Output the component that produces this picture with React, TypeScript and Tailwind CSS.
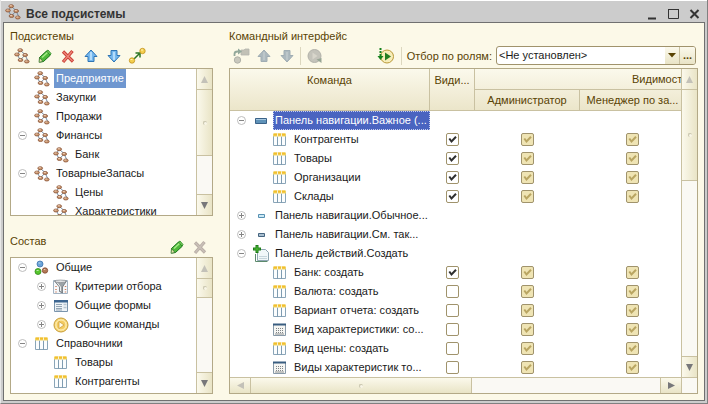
import React from 'react';

type IconName =
  | 'subsystem' | 'table' | 'common' | 'filter' | 'form' | 'command'
  | 'bar' | 'dash' | 'darkdash' | 'create' | 'chart';

const ovals = (pts: number[][], fill: string, edge: string) =>
  pts.map(([x, y], i) => (
    <g key={i}>
      <ellipse cx={x} cy={y} rx="2.4" ry="1.5" fill={fill} stroke={edge} strokeWidth="0.8" />
      <path d={`M${x - 1.4} ${y - 0.5}h2`} stroke="#f3d8c2" strokeWidth="0.8" />
    </g>
  ));

function Icon({ name }: { name: IconName }) {
  const body: Record<IconName, React.ReactNode> = {
    subsystem: (
      <>
        <path d="M6.500 2.500 3 6.500M6.500 2.500l4.500 4M11 7l-5 5.500M11 7l3 6M3.500 7l3 5.500" stroke="#64809a" strokeWidth="0.900" fill="none" />
        {ovals([[6.2, 2.2], [3, 6.5], [11.2, 7], [6.5, 12], [12.8, 13.5], [5, 14]].slice(0, 5), '#c8946c', '#8c5638')}
      </>
    ),
    table: (
      <>
        <path d="M1.500 2.500h12v11h-12z" fill="#fbfdfe" stroke="#8aa5b8" />
        <path d="M5.500 2v12M9.500 2v12" stroke="#7f9cb1" />
        <path d="M1 1.500h13v3H1z" fill="#efd368" />
        <path d="M2 2.500h3M6 2.500h3M10 2.500h3" stroke="#f3bf2c" strokeWidth="2" />
        <path d="M5.500 1.500v3M9.500 1.500v3" stroke="#fbf3cf" />
      </>
    ),
    common: (
      <>
        <circle cx="6" cy="4" r="3" fill="#69a3d8" stroke="#3f75ae" strokeWidth="0.800" />
        <circle cx="4" cy="11.500" r="3" fill="#57c62e" stroke="#2e8817" strokeWidth="0.800" />
        <circle cx="11" cy="10.500" r="2.700" fill="#b47a58" stroke="#83492d" strokeWidth="0.800" />
        <path d="M4.500 3h2M2.600 10.500h2M9.800 9.500h1.500" stroke="#fff" strokeOpacity="0.600" />
      </>
    ),
    filter: (
      <>
        <path d="M.5 1.500h14v13H.5z" fill="#f6f8fa" stroke="#a4b4c3" />
        <path d="M3 7v1M3 10v1M3 12.500v1M12.500 7v1M12.500 10v1M12.500 12.500v1" stroke="#cf8062" strokeWidth="1.500" />
        <path d="M1.500 2h12L9.500 8v6l-3-1.500V8z" fill="#9da3a7" stroke="#6b7277" strokeWidth="0.800" />
        <path d="M4 3.500 7.500 8v4" stroke="#eee" fill="none" />
        <ellipse cx="7.500" cy="2.300" rx="5.500" ry="1.300" fill="#e1e3e4" stroke="#7d8286" strokeWidth="0.600" />
      </>
    ),
    form: (
      <>
        <path d="M1.500 2.500h13v11h-13z" fill="#eef3f7" stroke="#7a95ad" />
        <path d="M1 2h14v2.500H1z" fill="#3d6691" />
        <path d="M3 6.500h6M3 8.500h6M3 10.500h6M3 12h6" stroke="#93a5b4" />
        <path d="M10.500 6.500h3M10.500 9.500h3" stroke="#b9c6d1" strokeWidth="1.500" />
      </>
    ),
    command: (
      <>
        <circle cx="8" cy="8" r="7" fill="#f8dc83" stroke="#c89b32" />
        <circle cx="8" cy="8" r="5" fill="#f4cb60" stroke="#fff0b8" />
        <path d="m6 4.500 5 3.500-5 3.500z" fill="#fffbe9" stroke="#c69a35" strokeWidth="0.700" />
      </>
    ),
    bar: (
      <>
        <path d="M2.500 5.500h11v5h-11z" fill="#5f92b8" stroke="#3a6288" />
        <path d="M3 6.500h10" stroke="#a6c7df" />
      </>
    ),
    dash: <path d="M5.500 6.500h6v3h-6z" fill="#cce9f5" stroke="#5790b2" />,
    darkdash: <path d="M5.500 6.500h6v3h-6z" fill="#a9bfd0" stroke="#45647f" />,
    create: (
      <>
        <path d="M4.500 3.500h8l3 3v8h-11z" fill="#f1f7f9" stroke="#8fa6b2" />
        <path d="M2.500 8v7.500h12" fill="none" stroke="#5c8a6c" />
        <path d="M6 12.500h8M6 10.500h8" stroke="#c6d5dc" />
        <path d="M4 -1v8M0 3h8" stroke="#1e7c18" strokeWidth="3" />
        <path d="M4 0v6M1 3h6" stroke="#50bf37" />
      </>
    ),
    chart: (
      <>
        <path d="M1.500 2.500h12v11h-12z" fill="#f6f6f3" stroke="#8799a8" />
        <path d="M1 2.500h13" stroke="#395d80" strokeWidth="2" />
        <path d="M4.500 6v6M6.500 6v6M8.500 6v6M10.500 6v6" stroke="#7f8487" strokeDasharray="1 1" />
        <path d="M3 12h9" stroke="#8c9092" />
      </>
    ),
  };
  return (
    <svg viewBox="0 0 16 16" className="size-4 shrink-0 overflow-visible" aria-hidden="true">
      {body[name]}
    </svg>
  );
}

function Arrow({ down, muted }: { down?: boolean; muted?: boolean }) {
  return (
    <svg viewBox="0 0 16 16" className={down ? 'size-4 rotate-180' : 'size-4'} aria-hidden="true">
      <path
        d="M8 2 14 8.500h-3V13.500H5V8.500H2z"
        fill={muted ? '#adb9be' : '#75b8ef'}
        stroke={muted ? '#a0adb3' : '#2f75b5'}
        strokeLinejoin="round"
      />
      <path d="M8 4v8" stroke={muted ? '#bcc6c9' : '#b4dcfb'} strokeWidth="2" />
    </svg>
  );
}

function Pencil() {
  return (
    <svg viewBox="0 0 16 16" className="size-4" aria-hidden="true">
      <path d="m2.500 9.500 7-6.500 4 4-7 6.500-4 .5z" fill="#4fb83b" stroke="#187419" />
      <path d="m5 9.500 6-5.500" stroke="#a4ec85" strokeWidth="1.500" />
      <path d="m9.500 3 1.500-1 3 3.500-1 1.500z" fill="#78cf5d" stroke="#23811e" strokeWidth="0.800" />
      <path d="m2.500 9.500 3.500 4-4 .8z" fill="#e8e3ae" stroke="#276c22" strokeWidth="0.700" />
    </svg>
  );
}

function Cross({ muted }: { muted?: boolean }) {
  return (
    <svg viewBox="0 0 16 16" className="size-4" aria-hidden="true">
      <path d="m3 3.500 10 10M12.500 3l-9.500 11" stroke={muted ? '#b9aea6' : '#c93e35'} strokeWidth="3.200" />
      <path d="m3.500 4 9 9M12 3.500l-8.500 10" stroke={muted ? '#c9c0b8' : '#ee8478'} strokeWidth="1.400" />
    </svg>
  );
}

function Move() {
  return (
    <svg viewBox="0 0 16 16" className="size-4 overflow-visible" aria-hidden="true">
      <path d="M5 11 10 6M6.500 5H11v4.500" fill="none" stroke="#2c7625" strokeWidth="1.500" />
      <circle cx="3" cy="12.500" r="2.700" fill="#f4cf4e" stroke="#c1901c" strokeWidth="0.800" />
      <circle cx="13.500" cy="3" r="2.700" fill="#f4cf4e" stroke="#c1901c" strokeWidth="0.800" />
      <path d="M1.500 11.500h2M12 2h2" stroke="#fff4b8" />
    </svg>
  );
}

function MoveToGroup() {
  return (
    <svg viewBox="0 0 16 16" className="size-4 overflow-visible" aria-hidden="true">
      <path d="M8 2h3l1-1h4v6H8z" fill="#c2c1b6" stroke="#b4b5ad" strokeWidth="0.800" />
      <path d="M1.500 8V6q0-2.500 3-2.500H7" fill="none" stroke="#93a89b" strokeWidth="1.800" />
      <path d="M5 0.500 9 3.500 5 6.500z" fill="#93a89b" />
      <circle cx="4.500" cy="12" r="3.200" fill="#c9c8bd" stroke="#b1b2a9" />
    </svg>
  );
}

function AddCommand() {
  return (
    <svg viewBox="0 0 16 16" className="size-4" aria-hidden="true">
      <circle cx="7.500" cy="8" r="6.500" fill="#c4c3ba" stroke="#b2b2aa" />
      <path d="m5.500 4.500 5 3.500-5 3.500z" fill="#d8d6cb" />
      <path d="m9.500 11.500 5-1.500v5z" fill="#97a595" />
    </svg>
  );
}

function RunCommand() {
  return (
    <svg viewBox="0 0 16 16" className="size-4 overflow-visible" aria-hidden="true">
      <circle cx="9" cy="8.500" r="6.500" fill="#f8edb8" stroke="#b99939" />
      <path d="m7 4.500 6 4-6 4z" fill="#247d22" />
      <path d="M2.500 0v2M2.500 3v2M2.500 6v3" stroke="#16821c" strokeWidth="2" />
      <path d="M-.5 8h6l-3 4z" fill="#16821c" />
    </svg>
  );
}

function ToolButton({ label, disabled, children }: { label: string; disabled?: boolean; children: React.ReactNode }) {
  return (
    <button type="button" aria-label={label} disabled={disabled} className="flex h-5 w-[23px] shrink-0 items-center justify-center">
      {children}
    </button>
  );
}

function Expander({ open }: { open?: boolean }) {
  return (
    <span className="flex w-[23px] shrink-0 justify-center">
      {open !== undefined && (
        <button type="button" aria-expanded={open} aria-label="±" className="block size-[9px]">
          <svg viewBox="0 0 9 9" className="size-[9px]" aria-hidden="true">
            <circle cx="4.500" cy="4.500" r="4" fill="#fff" stroke="#b4b4b4" strokeWidth="0.900" />
            <path d={open ? 'M2 4.500h5' : 'M2 4.500h5M4.500 2v5'} stroke="#858585" />
          </svg>
        </button>
      )}
    </span>
  );
}

interface Node { text: string; icon: IconName; level?: number; open?: boolean; selected?: boolean }

function Label({ node, selectedClass }: { node: Node; selectedClass: string }) {
  return (
    <div className={`flex h-[19px] items-center ${node.level ? 'pl-[19px]' : ''}`}>
      <Expander open={node.open} />
      <Icon name={node.icon} />
      <span className={`ml-1 h-[19px] px-[2px] whitespace-nowrap ${node.selected ? selectedClass : 'leading-[19px]'}`}>{node.text}</span>
    </div>
  );
}

const faceV = 'bg-linear-to-r from-[#fbf9ec] to-[#e9e4c6]';
const faceH = 'bg-linear-to-b from-[#fbf9ec] to-[#e9e4c6]';

function Tip({ dir, muted }: { dir: 'up' | 'down' | 'left' | 'right'; muted?: boolean }) {
  const d = { up: 'M4.500 1 8 8H1z', down: 'M1 1h7L4.500 8z', left: 'M1 4.500 8 1v7z', right: 'M1 1l7 3.500L1 8z' }[dir];
  return (
    <svg viewBox="0 0 9 9" className="size-[9px]" aria-hidden="true">
      <path d={d} fill={muted ? '#c3c1b8' : '#77777a'} />
    </svg>
  );
}

function Grip() {
  return <span className="size-1 rounded-full border-t border-l border-[#c8c4ad] bg-[#f8f5e6]" />;
}

function VScroll({ thumb }: { thumb: string }) {
  return (
    <div className="flex w-4 shrink-0 flex-col border-l border-[#c9c1a1] bg-[#faf9f4]">
      <button type="button" aria-label="▲" className={`flex h-[21px] shrink-0 items-center justify-center border-b border-[#c9c1a1] ${faceV}`}>
        <Tip dir="up" muted />
      </button>
      <div className={`flex shrink-0 items-center justify-center border-b border-[#c9c1a1] ${faceV} ${thumb}`}><Grip /></div>
      <div className="flex-1" />
      <button type="button" aria-label="▼" className={`flex h-[21px] shrink-0 items-center justify-center border-t border-[#c9c1a1] ${faceV}`}>
        <Tip dir="down" />
      </button>
    </div>
  );
}

function Tree({ nodes, thumb, className }: { nodes: Node[]; thumb: string; className: string }) {
  return (
    <div className={`flex overflow-hidden border border-[#b3a987] bg-white ${className}`}>
      <ul className="min-w-0 flex-1 overflow-hidden">
        {nodes.map((n) => (
          <li key={n.text}><Label node={n} selectedClass="bg-[#6f97d0] leading-[19px] text-white" /></li>
        ))}
      </ul>
      <VScroll thumb={thumb} />
    </div>
  );
}

function Check({ label, checked, disabled }: { label: string; checked?: boolean; disabled?: boolean }) {
  return (
    <label className="mx-auto grid size-[13px]">
      <input
        type="checkbox"
        aria-label={label}
        defaultChecked={checked}
        disabled={disabled}
        className="peer col-start-1 row-start-1 size-[13px] appearance-none rounded-[2px] border border-[#a0936c] bg-white disabled:bg-[#efe4b4]"
      />
      <svg
        viewBox="0 0 13 13"
        className="pointer-events-none invisible col-start-1 row-start-1 size-[13px] text-[#2f2f2f] peer-checked:visible peer-disabled:text-[#b9a562]"
        aria-hidden="true"
      >
        <path d="M3.300 5.500 5.500 8.500 10 3.800" fill="none" stroke="currentColor" strokeWidth="2" />
      </svg>
    </label>
  );
}

const subsystems: Node[] = [
  { text: 'Предприятие', icon: 'subsystem', selected: true },
  { text: 'Закупки', icon: 'subsystem' },
  { text: 'Продажи', icon: 'subsystem' },
  { text: 'Финансы', icon: 'subsystem', open: true },
  { text: 'Банк', icon: 'subsystem', level: 1 },
  { text: 'ТоварныеЗапасы', icon: 'subsystem', open: true },
  { text: 'Цены', icon: 'subsystem', level: 1 },
  { text: 'Характеристики', icon: 'subsystem', level: 1 },
];

const contents: Node[] = [
  { text: 'Общие', icon: 'common', open: true },
  { text: 'Критерии отбора', icon: 'filter', level: 1, open: false },
  { text: 'Общие формы', icon: 'form', level: 1, open: false },
  { text: 'Общие команды', icon: 'command', level: 1, open: false },
  { text: 'Справочники', icon: 'table', open: true },
  { text: 'Товары', icon: 'table', level: 1 },
  { text: 'Контрагенты', icon: 'table', level: 1 },
];

const commands: (Node & { visible?: boolean })[] = [
  { text: 'Панель навигации.Важное (...', icon: 'bar', open: true, selected: true },
  { text: 'Контрагенты', icon: 'table', level: 1, visible: true },
  { text: 'Товары', icon: 'table', level: 1, visible: true },
  { text: 'Организации', icon: 'table', level: 1, visible: true },
  { text: 'Склады', icon: 'table', level: 1, visible: true },
  { text: 'Панель навигации.Обычное...', icon: 'dash', open: false },
  { text: 'Панель навигации.См. так...', icon: 'darkdash', open: false },
  { text: 'Панель действий.Создать', icon: 'create', open: true },
  { text: 'Банк: создать', icon: 'table', level: 1, visible: true },
  { text: 'Валюта: создать', icon: 'table', level: 1, visible: false },
  { text: 'Вариант отчета: создать', icon: 'table', level: 1, visible: false },
  { text: 'Вид характеристики: со...', icon: 'chart', level: 1, visible: false },
  { text: 'Вид цены: создать', icon: 'table', level: 1, visible: false },
  { text: 'Виды характеристик то...', icon: 'chart', level: 1, visible: false },
];

const th = 'overflow-hidden border-b border-[#c9c1a1] p-0 font-normal whitespace-nowrap';

function CommandTable() {
  return (
    <table className="w-full min-w-[455px] table-fixed border-separate border-spacing-0">
      <colgroup>
        <col className="w-[200px]" />
        <col className="w-[45px]" />
        <col className="w-[105px]" />
        <col />
      </colgroup>
      <thead className="bg-linear-to-b from-[#fbf9ec] to-[#ebe5c9] text-[#594304]">
        <tr className="h-[21px]">
          <th rowSpan={2} className={`${th} border-r pt-1 align-top`}>Команда</th>
          <th rowSpan={2} className={`${th} border-r pt-1 align-top`}>Види...</th>
          <th colSpan={2} className={`${th} pl-[157px] text-left`}>Видимост</th>
        </tr>
        <tr className="h-[21px]">
          <th className={`${th} border-r`}>Администратор</th>
          <th className={th}>Менеджер по за...</th>
        </tr>
      </thead>
      <tbody>
        {commands.map((c) => (
          <tr key={c.text} className="h-[19px]">
            <td className="p-0">
              <Label node={c} selectedClass="flex-1 border border-dotted border-[#c5cdf0] bg-[#4a64c0] pl-px leading-[17px] text-white" />
            </td>
            {c.visible === undefined ? (
              <td colSpan={3} className="p-0" />
            ) : (
              <>
                <td className="p-0"><Check label={c.text} checked={c.visible} /></td>
                <td className="p-0"><Check label={c.text} checked disabled /></td>
                <td className="p-0"><Check label={c.text} checked disabled /></td>
              </>
            )}
          </tr>
        ))}
      </tbody>
    </table>
  );
}

function TitleBar() {
  return (
    <header className="flex h-[22px] shrink-0 items-center border-t border-white bg-[#cccccc] pr-[6px] pl-1">
      <Icon name="subsystem" />
      <h1 className="ml-[5px] flex-1 pt-1 text-[12px] leading-4 font-bold text-[#333333]">Все подсистемы</h1>
      <div className="flex gap-2 pt-1">
        {['M1 10.500h8', 'M.5 1.500h10v9H.5zM0 1.500h11', 'M1.500 2l8 8M9.500 2l-8 8'].map((d, i) => (
          <button key={d} type="button" aria-label={['_', '□', '×'][i]} className="flex size-[13px] items-center justify-center">
            <svg viewBox="0 0 12 12" className="size-3" aria-hidden="true">
              <path d={d} fill="none" stroke="#333" strokeWidth={i === 1 ? 1 : 2} />
            </svg>
          </button>
        ))}
      </div>
    </header>
  );
}

export default function App() {
  return (
    <div className="flex h-screen min-h-[404px] w-full flex-col border-r border-b border-l border-r-[#808080] border-b-[#808080] border-l-[#e8e8e8] bg-[#cccccc] font-['Liberation_Sans',Arial,sans-serif] text-[11px] leading-[14px] text-[#1a1a1a]">
      <TitleBar />
      <main className="mx-[2px] mb-[2px] flex min-h-0 flex-1 gap-4 border border-[#707070] bg-[#fcf9e8] px-[6px] py-[6px]">
        <aside className="flex w-[203px] shrink-0 flex-col">
          <h2 className="h-[14px] text-[#594304]">Подсистемы</h2>
          <div className="flex h-[25px] items-center">
            <ToolButton label="Подсистемы"><Icon name="subsystem" /></ToolButton>
            <ToolButton label="Изменить"><Pencil /></ToolButton>
            <ToolButton label="Удалить"><Cross /></ToolButton>
            <ToolButton label="Вверх"><Arrow /></ToolButton>
            <ToolButton label="Вниз"><Arrow down /></ToolButton>
            <ToolButton label="Переместить"><Move /></ToolButton>
          </div>
          <Tree nodes={subsystems} thumb="h-[66px]" className="min-h-0 flex-1" />
          <div className="flex h-[41px] shrink-0 items-center">
            <h2 className="mt-2 flex-1 text-[#594304]">Состав</h2>
            <div className="mt-5 mr-[2px] flex">
              <ToolButton label="Изменить"><Pencil /></ToolButton>
              <ToolButton label="Удалить" disabled><Cross muted /></ToolButton>
            </div>
          </div>
          <Tree nodes={contents} thumb="h-[19px]" className="h-[137px] shrink-0" />
        </aside>

        <section className="flex min-w-0 flex-1 flex-col">
          <h2 className="h-[14px] text-[#594304]">Командный интерфейс</h2>
          <div className="flex h-[25px] items-center">
            <ToolButton label="Переместить" disabled><MoveToGroup /></ToolButton>
            <ToolButton label="Вверх" disabled><Arrow muted /></ToolButton>
            <ToolButton label="Вниз" disabled><Arrow down muted /></ToolButton>
            <span className="mx-[2px] h-[18px] w-px bg-[#dcd7bf]" />
            <ToolButton label="Добавить" disabled><AddCommand /></ToolButton>
            <span className="flex-1" />
            <ToolButton label="Выполнить"><RunCommand /></ToolButton>
            <span className="mr-[5px] ml-[3px] h-[18px] w-px bg-[#dcd7bf]" />
            <label htmlFor="role" className="mr-1 whitespace-nowrap text-[#594304]">Отбор по ролям:</label>
            <div className="mr-[2px] flex h-[19px] w-[200px] overflow-hidden rounded-[3px] border border-[#a0936c] bg-white">
              <div className="grid min-w-0 flex-1">
                <select id="role" className="col-start-1 row-start-1 w-full appearance-none bg-transparent pl-[2px] leading-[17px]">
                  <option>&lt;Не установлен&gt;</option>
                </select>
                <span className={`pointer-events-none col-start-1 row-start-1 flex w-[15px] items-center justify-center justify-self-end border-r border-[#c9c1a1] ${faceH}`}>
                  <svg viewBox="0 0 8 5" className="h-[5px] w-2" aria-hidden="true"><path d="M0 0h8L4 4.500z" fill="#594304" /></svg>
                </span>
              </div>
              <button type="button" className={`w-[15px] leading-[15px] font-bold text-[#594304] ${faceH}`}>...</button>
            </div>
          </div>
          <div className="flex min-h-0 flex-1 flex-col overflow-hidden border border-[#b3a987] bg-white">
            <div className="flex min-h-0 flex-1">
              <div className="min-w-0 flex-1 overflow-hidden"><CommandTable /></div>
              <VScroll thumb="h-[91px]" />
            </div>
            <div className="flex h-4 shrink-0 border-t border-[#c9c1a1] bg-[#faf9f4]">
              <button type="button" aria-label="◀" className={`flex w-[21px] items-center justify-center border-r border-[#c9c1a1] ${faceH}`}><Tip dir="left" muted /></button>
              <div className={`flex w-[221px] items-center justify-center border-r border-[#c9c1a1] ${faceH}`}><Grip /></div>
              <div className="flex-1" />
              <button type="button" aria-label="▶" className={`flex w-[22px] items-center justify-center border-x border-[#c9c1a1] ${faceH}`}><Tip dir="right" /></button>
              <div className="w-[15px]" />
            </div>
          </div>
        </section>
      </main>
    </div>
  );
}
